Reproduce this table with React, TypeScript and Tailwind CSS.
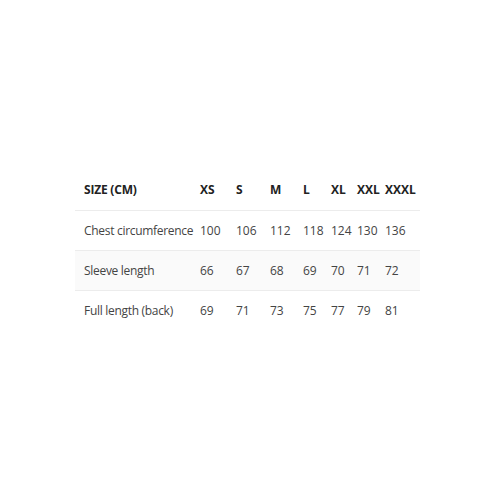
import React from "react";

const sizes = ["XS", "S", "M", "L", "XL", "XXL", "XXXL"];
const widths = ["w-[36px]", "w-[34px]", "w-[33px]", "w-[28px]", "w-[26px]", "w-[28px]", "w-[39px]"];

const rows = [
  { label: "Chest circumference", values: [100, 106, 112, 118, 124, 130, 136] },
  { label: "Sleeve length", values: [66, 67, 68, 69, 70, 71, 72] },
  { label: "Full length (back)", values: [69, 71, 73, 75, 77, 79, 81] },
];

const App = () => {
  return (
    <div className="w-[500px] h-[500px] bg-white pt-[170px] pl-[75px] font-['Open_Sans',sans-serif] text-[12px]">
      <table className="border-collapse table-fixed w-[345px]">
        <thead>
          <tr className="h-[40px] border-b border-[#ececec]">
            <th className="w-[121px] pl-[9px] pt-[1px] text-left font-bold text-[#222] tracking-[-0.2px]">SIZE (CM)</th>
            {sizes.map((s, i) => (
              <th key={s} className={`${widths[i]} pl-[4px] pt-[1px] text-left font-bold text-[#222]`}>
                {s}
              </th>
            ))}
          </tr>
        </thead>
        <tbody>
          {rows.map((r, ri) => (
            <tr
              key={r.label}
              className={`h-[40px] ${ri < rows.length - 1 ? "border-b border-[#ececec]" : ""} ${ri === 1 ? "bg-[#fafafa]" : ""}`}
            >
              <td className="pl-[9px] pt-[1px] text-left tracking-[-0.3px] text-[#444] whitespace-nowrap">{r.label}</td>
              {r.values.map((v, i) => (
                <td key={i} className="pl-[4px] pt-[1px] text-left text-[#444]">
                  {v}
                </td>
              ))}
            </tr>
          ))}
        </tbody>
      </table>
    </div>
  );
};

export default App;
